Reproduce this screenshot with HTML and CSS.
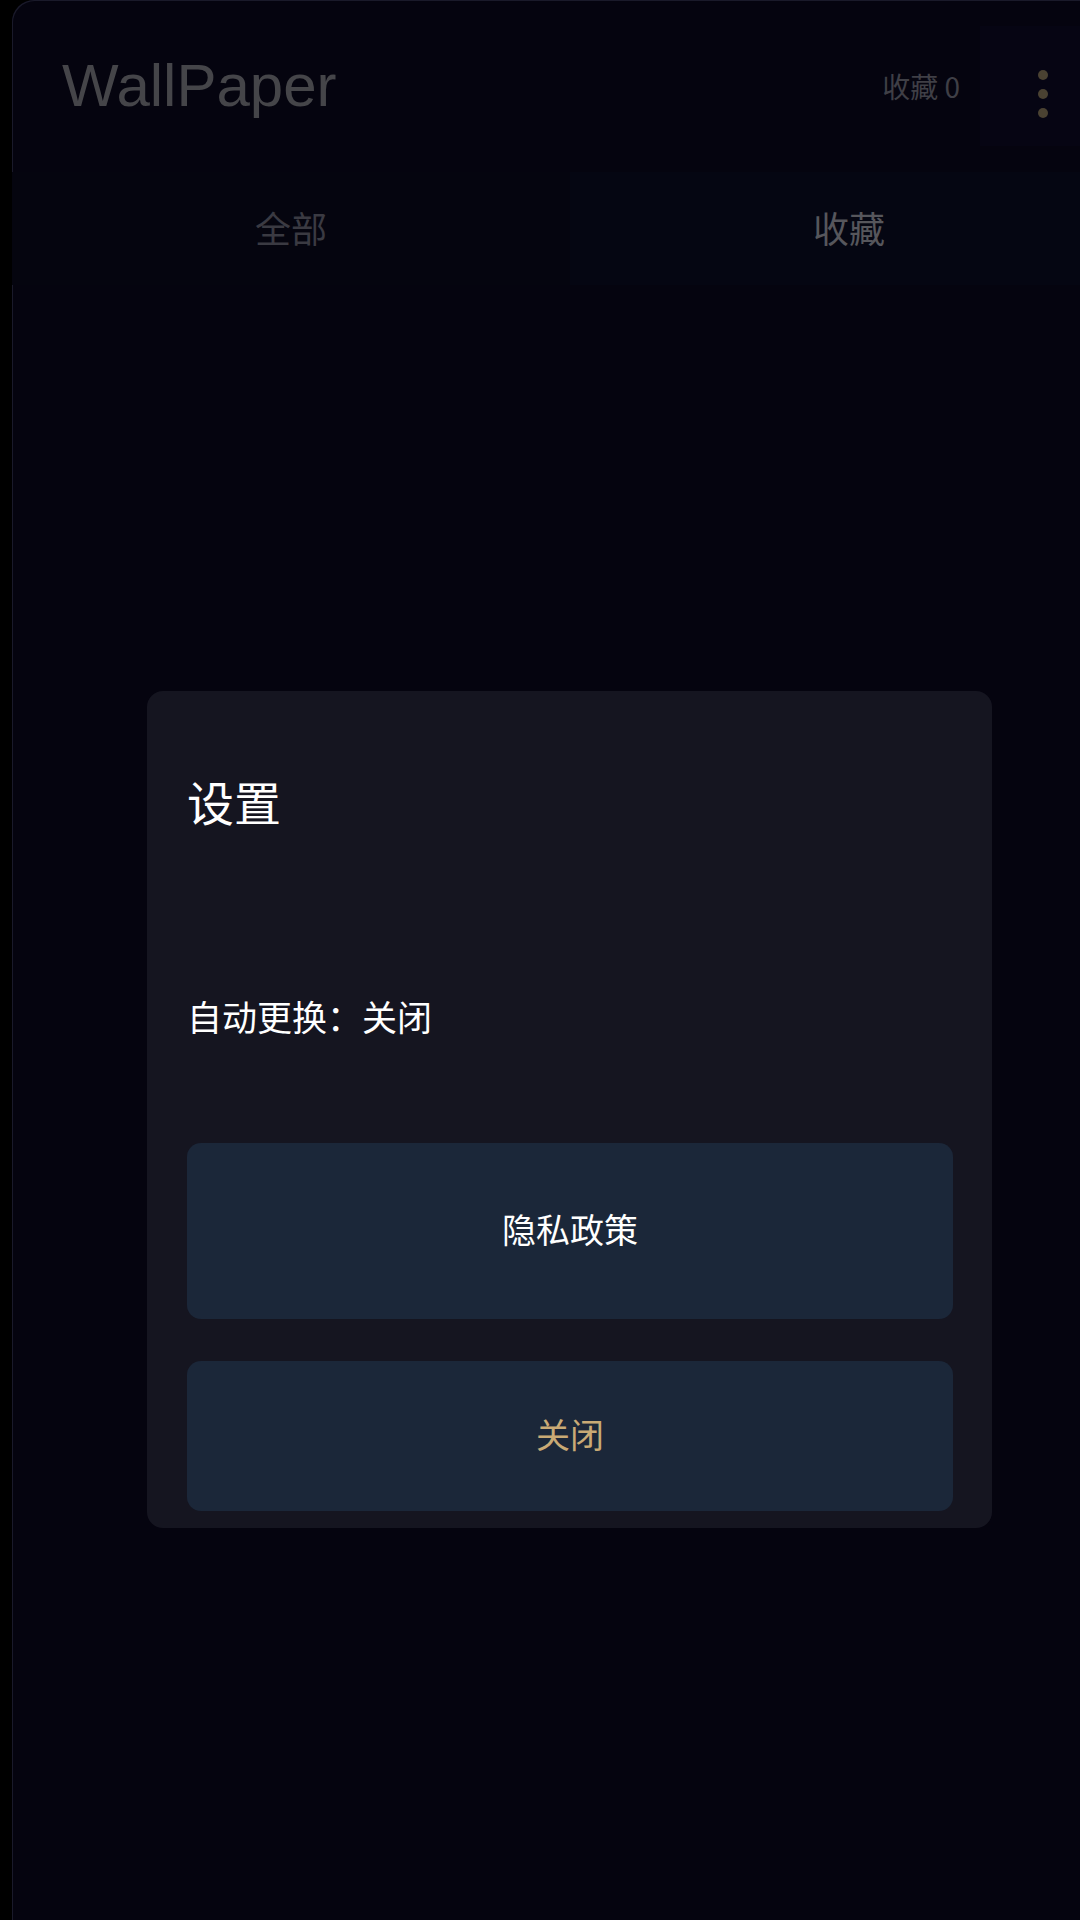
FILE: index.html
```html
<!DOCTYPE html>
<html lang="zh-CN">
<head>
<meta charset="utf-8">
<title>WallPaper</title>
<link rel="stylesheet" href="styles.css">
</head>
<body>
<div class="screen">
  <div class="strip"></div>
  <div class="app">
    <header class="topbar">
      <h1 class="brand">WallPaper</h1>
      <span class="fav-count">收藏 0</span>
      <div class="menu">
        <span class="dot"></span>
        <span class="dot"></span>
        <span class="dot"></span>
      </div>
    </header>
    <nav class="tabs">
      <div class="tab">全部</div>
      <div class="tab active">收藏</div>
    </nav>
    <main class="content"></main>
  </div>
</div>

<div class="dialog">
  <h2 class="dialog-title">设置</h2>
  <p class="dialog-row">自动更换：关闭</p>
  <button class="dlg-btn primary">隐私政策</button>
  <button class="dlg-btn close">关闭</button>
</div>
</body>
</html>
```
FILE: styles.css
```css
html, body {
  margin: 0;
  padding: 0;
}
body {
  width: 1080px;
  height: 1920px;
  overflow: hidden;
  background: #000000;
  font-family: "Noto Sans CJK SC", "Noto Sans", sans-serif;
}
.screen {
  display: flex;
  width: 1080px;
  height: 1920px;
}
.strip {
  width: 12px;
  background: #000000;
  flex: none;
}
.app {
  flex: 1;
  display: flex;
  flex-direction: column;
  background: #05040f;
  border-top-left-radius: 22px;
  box-shadow: inset 1px 1px 0 #1a1a2a;
  overflow: hidden;
}
.topbar {
  height: 172px;
  display: flex;
  align-items: center;
  padding-left: 50px;
  flex: none;
}
.brand {
  flex: 1;
  margin: 0;
  font-family: "Liberation Sans", Arial, sans-serif;
  font-weight: 400;
  font-size: 60px;
  line-height: 60px;
  color: #454549;
}
.fav-count {
  font-size: 28px;
  line-height: 36px;
  color: #3f3f46;
  margin-right: 20px;
}
.menu {
  width: 100px;
  height: 120px;
  display: flex;
  flex-direction: column;
  align-items: flex-end;
  justify-content: center;
  gap: 9px;
  padding: 16px 32px 0 0;
  box-sizing: border-box;
  background: #060513;
}
.dot {
  width: 10px;
  height: 10px;
  border-radius: 50%;
  background: #4a4232;
}
.tabs {
  display: grid;
  grid-template-columns: 558px 558px;
  height: 113px;
  flex: none;
}
.tab {
  display: flex;
  align-items: center;
  justify-content: center;
  padding-bottom: 4px;
  font-size: 36px;
  color: #3a3a42;
  background: #05050f;
}
.tab.active {
  color: #56565c;
  background: #050612;
}
.content {
  flex: 1;
}
.dialog {
  position: absolute;
  left: 147px;
  top: 691px;
  width: 845px;
  box-sizing: border-box;
  padding: 82px 39px 17px 40px;
  background: #151520;
  border-radius: 16px;
  display: flex;
  flex-direction: column;
}
.dialog-title {
  margin: 0;
  font-size: 47px;
  line-height: 56px;
  font-weight: 400;
  color: #ffffff;
}
.dialog-row {
  margin: 165px 0 0;
  font-size: 35px;
  line-height: 44px;
  color: #ffffff;
}
.dlg-btn {
  border: none;
  border-radius: 14px;
  background: #1b2739;
  font-family: "Noto Sans CJK SC", "Noto Sans", sans-serif;
  font-size: 34px;
  padding: 0 0 6px;
  display: flex;
  align-items: center;
  justify-content: center;
}
.dlg-btn.primary {
  margin-top: 105px;
  height: 176px;
  color: #ffffff;
}
.dlg-btn.close {
  margin-top: 42px;
  height: 150px;
  color: #c9aa75;
}
```
